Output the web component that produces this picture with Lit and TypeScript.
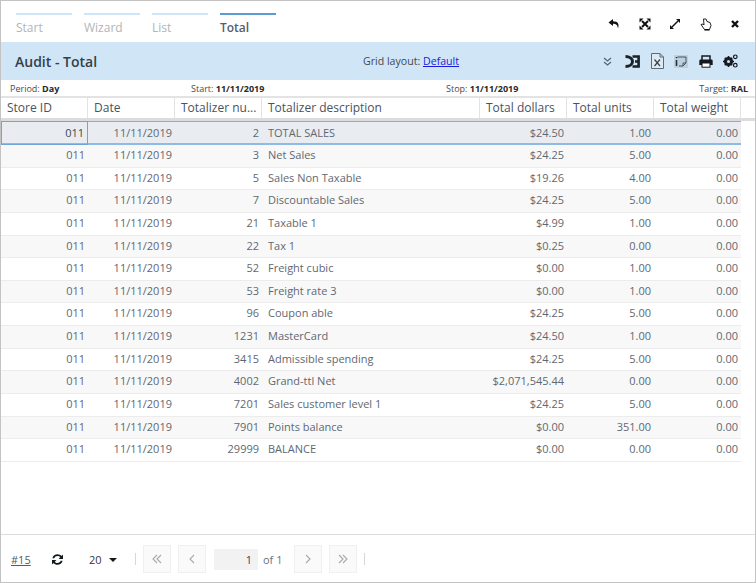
import { LitElement, css, html, svg } from 'lit';
import { customElement } from 'lit/decorators.js';

const columns = ['Store ID', 'Date', 'Totalizer nu...', 'Totalizer description', 'Total dollars', 'Total units', 'Total weight'];

const rows: string[][] = [
	['2', 'TOTAL SALES', '$24.50', '1.00'],
	['3', 'Net Sales', '$24.25', '5.00'],
	['5', 'Sales Non Taxable', '$19.26', '4.00'],
	['7', 'Discountable Sales', '$24.25', '5.00'],
	['21', 'Taxable 1', '$4.99', '1.00'],
	['22', 'Tax 1', '$0.25', '0.00'],
	['52', 'Freight cubic', '$0.00', '1.00'],
	['53', 'Freight rate 3', '$0.00', '1.00'],
	['96', 'Coupon able', '$24.25', '5.00'],
	['1231', 'MasterCard', '$24.50', '1.00'],
	['3415', 'Admissible spending', '$24.25', '5.00'],
	['4002', 'Grand-ttl Net', '$2,071,545.44', '0.00'],
	['7201', 'Sales customer level 1', '$24.25', '5.00'],
	['7901', 'Points balance', '$0.00', '351.00'],
	['29999', 'BALANCE', '$0.00', '0.00'],
];

const icon = (w: number, h: number, body: unknown) =>
	html`<svg width=${w} height=${h} viewBox="0 0 ${w} ${h}">${body}</svg>`;

const undoIcon = icon(12, 12, svg`<path d="M5 1 L0.5 4.5 L5 8 V5.8 C8 5.8 9.5 6.8 10 10.5 C11.5 6 10 3.2 5 3.2 Z" fill="#111"/>`);
const shrinkIcon = icon(12, 12, svg`<path d="M3 3 L9 9 M9 3 L3 9" stroke="#111" stroke-width="2"/><path d="M0.5 0.5 H4.5 L0.5 4.5 Z M11.5 0.5 H7.5 L11.5 4.5 Z M0.5 11.5 H4.5 L0.5 7.5 Z M11.5 11.5 H7.5 L11.5 7.5 Z" fill="#111"/>`);
const expandIcon = icon(12, 12, svg`<path d="M3 9 L9 3" stroke="#111" stroke-width="1.4"/><path d="M7 1 H11 V5 Z M1 7 V11 H5 Z" fill="#111"/>`);
const handIcon = icon(12, 13, svg`<path d="M3.5 1 L6 1 L7 3.5 L10 4.5 L11 7.5 L9.5 11.5 L4.5 11.5 L1 6.5 L3 6 L4 7 Z" fill="#fff" stroke="#222" stroke-width="1" stroke-linejoin="round"/><path d="M4.5 11.8 H9.5" stroke="#111" stroke-width="1.6"/>`);
const closeIcon = icon(10, 10, svg`<path d="M2 2 L8 8 M8 2 L2 8" stroke="#111" stroke-width="2.4"/>`);
const chevronsIcon = icon(9, 9, svg`<path d="M1 1 L4.5 4 L8 1 M1 5 L4.5 8 L8 5" fill="none" stroke="#56626e" stroke-width="1.2"/>`);
const d3Icon = icon(15, 15, svg`<path d="M0.5 2.5 C4.5 2.5 7.5 4.5 7.5 7.5 C7.5 10.5 4.5 12.5 0.5 12.5" fill="none" stroke="#1b2126" stroke-width="3"/><path d="M7.5 2.5 H13.6 V12.5 H7.5 M10 7.5 H13.6" fill="none" stroke="#1b2126" stroke-width="2.6"/>`);
const excelIcon = icon(13, 16, svg`<path d="M0.5 0.5 H9 L12.5 4 V15.5 H0.5 Z M9 0.5 V4 H12.5" fill="#dfe9f2" stroke="#5c6b78"/><path d="M3.5 6.5 L9 13 M9 6.5 L3.5 13" stroke="#34424e" stroke-width="1.2"/>`);
const noteIcon = icon(14, 13, svg`<rect x="0" y="0" width="14" height="13" fill="#bdd0e0"/><path d="M3.5 2 H12 V8 L9 11 H5" fill="none" stroke="#46535f"/><path d="M2.5 5 V11" stroke="#26313a" stroke-width="1.6"/><path d="M2.5 2 V3.2" stroke="#26313a" stroke-width="1.6"/><path d="M9 11 V8 H12" fill="none" stroke="#46535f"/>`);
const printIcon = icon(14, 13, svg`<path d="M3 5 V1 H11 V5" fill="none" stroke="#14191e" stroke-width="1.5"/><path d="M1.5 4.6 H12.5 Q13.7 4.6 13.7 6 V10 H0.3 V6 Q0.3 4.6 1.5 4.6 Z" fill="#14191e"/><rect x="3" y="8" width="8" height="4.2" fill="#fff" stroke="#14191e"/>`);
const gearsIcon = icon(15, 14, svg`<circle cx="5.5" cy="7.5" r="3.4" fill="none" stroke="#14191e" stroke-width="2.4"/><path d="M5.5 2 V13 M0 7.5 H11 M1.8 3.8 L9.2 11.2 M9.2 3.8 L1.8 11.2" stroke="#14191e" stroke-width="1.6"/><circle cx="5.5" cy="7.5" r="1.5" fill="#d0e6f7"/><circle cx="12.3" cy="2.8" r="1.8" fill="none" stroke="#14191e" stroke-width="1.2"/><circle cx="12.3" cy="11.2" r="1.8" fill="none" stroke="#14191e" stroke-width="1.2"/>`);
const refreshIcon = icon(13, 13, svg`<path d="M1.4 5.2 C2 2.6 4 1.2 6.5 1.2 C8.2 1.2 9.6 1.9 10.5 3 L12 1.6 V6 H7.6 L9.2 4.3 C8.6 3.5 7.6 3 6.5 3 C5 3 3.8 3.9 3.3 5.2 Z M11.6 7.8 C11 10.4 9 11.8 6.5 11.8 C4.8 11.8 3.4 11.1 2.5 10 L1 11.4 V7 H5.4 L3.8 8.7 C4.4 9.5 5.4 10 6.5 10 C8 10 9.2 9.1 9.7 7.8 Z" fill="#14191e"/>`);
const chevron = (d: string) => icon(12, 12, svg`<path d=${d} fill="none" stroke="#a3a9ae" stroke-width="1.1"/>`);

@customElement('app-root')
export class AppRoot extends LitElement {
	static styles = css`
		:host {
			display: block;
			width: 756px;
			height: 583px;
			box-sizing: border-box;
			border: 1px solid #c3c3c3;
			font-family: 'Open Sans', sans-serif;
			font-size: 11px;
			color: #5c6670;
			background: #fff;
			overflow: hidden;
		}
		.page {
			display: flex;
			flex-direction: column;
			height: 100%;
		}
		.top {
			display: flex;
			justify-content: space-between;
			height: 41px;
			padding: 12px 15px 0;
			box-sizing: border-box;
		}
		.steps {
			display: flex;
			gap: 12px;
		}
		.step {
			width: 56px;
			border-top: 2px solid #cde5f8;
			padding-top: 3px;
			font-size: 12px;
			line-height: 19px;
			color: #b2b5b8;
		}
		.step.active {
			border-top-color: #5d9bd5;
			color: #56606a;
			font-weight: 600;
		}
		.tools {
			display: flex;
			align-items: center;
			gap: 18.5px;
			height: 24px;
			margin-top: -1px;
		}
		.tools svg,
		.actions svg {
			display: block;
		}
		.band {
			display: grid;
			grid-template-columns: 348px auto 1fr;
			align-items: center;
			height: 38px;
			padding: 0 7px 0 14px;
			background: #d0e6f7;
			color: #3f4952;
		}
		.band h1 {
			margin: 0;
			font-size: 14px;
			font-weight: 600;
			color: #333f49;
		}
		.layout {
			font-size: 10.6px;
		}
		.layout a {
			color: #1a1ae0;
		}
		.actions {
			display: flex;
			justify-content: flex-end;
			align-items: center;
			gap: 10.5px;
			padding-right: 10px;
		}
		.actions .chev {
			margin-right: 2.5px;
		}
		.info {
			display: grid;
			grid-template-columns: 181px 255px 1fr auto;
			align-items: center;
			height: 16px;
			padding: 0 7px 0 9px;
			font-size: 9px;
			color: #4b4b4b;
		}
		.info b {
			color: #2a2a2a;
		}
		.grid {
			flex: 1;
			min-height: 0;
		}
		.row {
			display: grid;
			grid-template-columns: 87px 87px 87px 218px 87px 87px 87px;
			width: 740px;
			height: 22.64px;
			box-sizing: border-box;
			border-bottom: 1px solid #ececec;
			background: #fff;
		}
		.row.even {
			background: #f8f8f8;
		}
		.row.selected {
			background: #e9edf2;
			border-top: 1px solid #7eb1e0;
			border-bottom: 2px solid #8dbbe6;
			height: 24px;
		}
		.row.head {
			width: 755px;
			height: 25px;
			background: #fff;
			border-top: 2px solid #e3e3e3;
			border-bottom: 3px solid #dcdcdc;
		}
		.cell {
			padding: 0 3px 0 6px;
			font-size: 11px;
			line-height: 19px;
			white-space: nowrap;
			overflow: hidden;
			text-align: right;
			color: #5f6872;
		}
		.cell.text {
			text-align: left;
		}
		.row.selected .cell {
			line-height: 22px;
		}
		.head .cell {
			padding: 0 6px;
			font-size: 12px;
			line-height: 20px;
			text-align: left;
			color: #49535d;
			border-right: 1px solid #e3e3e3;
		}
		.row.selected .cell.current {
			margin: -1px 0 -2px;
			border: 1px solid #6ea6da;
			padding: 0 3px 0 0;
			line-height: 22px;
			color: #3c4650;
		}
		.foot {
			display: flex;
			align-items: center;
			height: 47px;
			border-top: 1px solid #dcdcdc;
			padding-left: 10px;
			font-size: 11px;
			color: #48525c;
		}
		.foot .ref {
			width: 40px;
			margin-top: 2px;
			color: #4f5d6b;
			text-decoration: underline;
		}
		.foot .refresh {
			display: flex;
			width: 38px;
			margin-top: 2px;
		}
		.size {
			display: flex;
			align-items: center;
			gap: 7px;
			width: 46px;
			margin-top: 2px;
			color: #2f3943;
		}
		.caret {
			width: 0;
			height: 0;
			border: 4px solid transparent;
			border-top: 4px solid #14191e;
			border-bottom: 0;
		}
		.sep {
			width: 1px;
			height: 12px;
			background: #d6d6d6;
			margin-right: 7px;
		}
		.page-btn {
			display: flex;
			align-items: center;
			justify-content: center;
			width: 28px;
			height: 28px;
			box-sizing: border-box;
			border: 1px solid #f0f0f0;
			background: #fafafa;
			margin-right: 7px;
		}
		.current-page {
			width: 44px;
			height: 21px;
			line-height: 21px;
			padding-right: 6px;
			box-sizing: border-box;
			text-align: right;
			background: #f2f2f2;
			color: #3a444e;
			margin: 2px 5px 0 1px;
		}
		.of {
			width: 31px;
			margin-top: 2px;
			color: #6a737c;
		}
	`;

	private renderRow(r: string[], i: number) {
		const selected = i === 0;
		const cls = `row ${selected ? 'selected' : ''} ${i % 2 ? 'even' : ''}`;
		return html`<div class=${cls}>
			<div class="cell ${selected ? 'current' : ''}">011</div>
			<div class="cell">11/11/2019</div>
			<div class="cell">${r[0]}</div>
			<div class="cell text">${r[1]}</div>
			<div class="cell">${r[2]}</div>
			<div class="cell">${r[3]}</div>
			<div class="cell">0.00</div>
		</div>`;
	}

	render() {
		return html`<div class="page">
			<div class="top">
				<div class="steps">
					<div class="step">Start</div>
					<div class="step">Wizard</div>
					<div class="step">List</div>
					<div class="step active">Total</div>
				</div>
				<div class="tools">${undoIcon}${shrinkIcon}${expandIcon}${handIcon}${closeIcon}</div>
			</div>
			<div class="band">
				<h1>Audit - Total</h1>
				<div class="layout">Grid layout: <a href="#">Default</a></div>
				<div class="actions">
					<span class="chev">${chevronsIcon}</span>
					${d3Icon}${excelIcon}${noteIcon}${printIcon}${gearsIcon}
				</div>
			</div>
			<div class="info">
				<span>Period: <b>Day</b></span>
				<span>Start: <b>11/11/2019</b></span>
				<span>Stop: <b>11/11/2019</b></span>
				<span>Target: <b>RAL</b></span>
			</div>
			<div class="grid">
				<div class="row head">${columns.map((c) => html`<div class="cell">${c}</div>`)}</div>
				${rows.map((r, i) => this.renderRow(r, i))}
			</div>
			<div class="foot">
				<span class="ref">#15</span>
				<span class="refresh">${refreshIcon}</span>
				<span class="size">20 <span class="caret"></span></span>
				<span class="sep"></span>
				<span class="page-btn">${chevron('M6 2 L2 6 L6 10 M10 2 L6 6 L10 10')}</span>
				<span class="page-btn">${chevron('M8 2 L4 6 L8 10')}</span>
				<span class="current-page">1</span>
				<span class="of">of 1</span>
				<span class="page-btn">${chevron('M4 2 L8 6 L4 10')}</span>
				<span class="page-btn">${chevron('M2 2 L6 6 L2 10 M6 2 L10 6 L6 10')}</span>
				<span class="sep"></span>
			</div>
		</div>`;
	}
}
